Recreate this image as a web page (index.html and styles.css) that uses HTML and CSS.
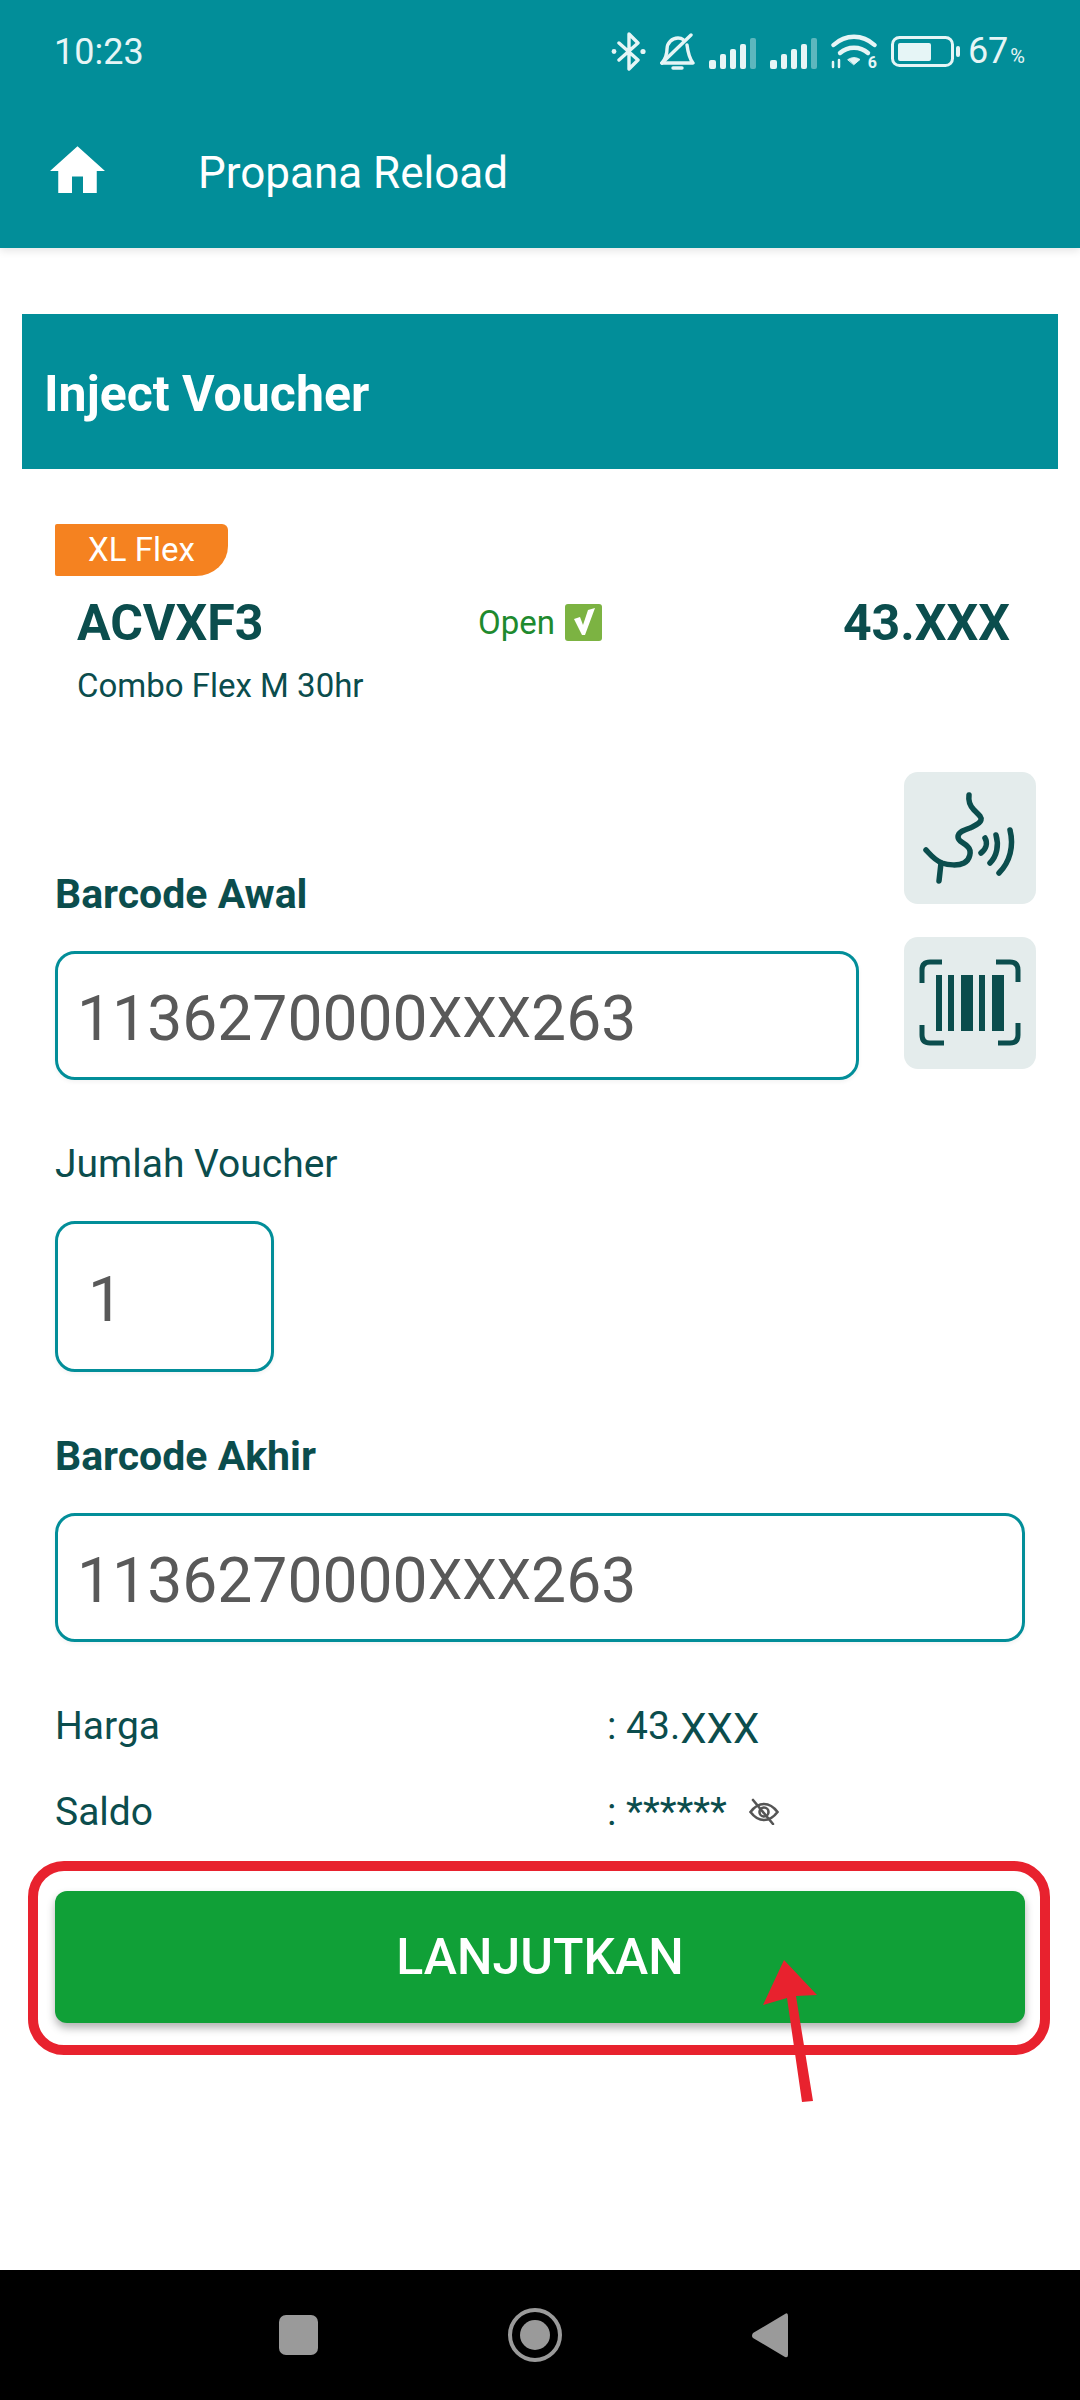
FILE: index.html
```html
<!DOCTYPE html>
<html lang="id">
<head>
    <meta charset="UTF-8">
    <meta name="viewport" content="width=device-width, initial-scale=1.0">
    <title>Propana Reload</title>
    <link rel="stylesheet" href="styles.css">
</head>
<body>
    <div class="page">
        <header class="top">
            <div class="status-bar">
                <span class="time">10:23</span>
                <div class="status-icons">
                    <svg width="35" height="39" viewBox="0 0 35 39" fill="none" stroke="#e6f5f6" stroke-width="3.4" stroke-linejoin="round" stroke-linecap="round">
                        <path d="M8 11l19 17-9 9V2l9 9L8 28"/>
                        <circle cx="3" cy="19.5" r="2.4" fill="#e6f5f6" stroke="none"/>
                        <circle cx="32" cy="19.5" r="2.6" fill="#e6f5f6" stroke="none"/>
                    </svg>
                    <svg width="35" height="37" viewBox="0 0 35 37" fill="none" stroke="#e6f5f6" stroke-width="3.4" stroke-linecap="round" stroke-linejoin="round">
                        <path d="M2 30c4-5 5-9 5-14 0-6 5-11 11-11 2 0 4 .6 5 1.500"/>
                        <path d="M27 12c1 8 2 13 6 18H2"/>
                        <path d="M2 30L31 2"/>
                        <path d="M13 35h9"/>
                    </svg>
                    <svg class="signal" width="47" height="31" viewBox="0 0 47 31">
                        <rect x="0" y="22" width="7" height="9" rx="2"/>
                        <rect x="11" y="16" width="6" height="15" rx="2"/>
                        <rect x="21" y="11" width="6" height="20" rx="2"/>
                        <rect x="31" y="6" width="6" height="25" rx="2"/>
                        <rect class="dim" x="41" y="0" width="6" height="31" rx="2"/>
                    </svg>
                    <svg class="signal" width="47" height="31" viewBox="0 0 47 31">
                        <rect x="0" y="22" width="7" height="9" rx="2"/>
                        <rect x="11" y="16" width="6" height="15" rx="2"/>
                        <rect x="21" y="11" width="6" height="20" rx="2"/>
                        <rect x="31" y="6" width="6" height="25" rx="2"/>
                        <rect class="dim" x="41" y="0" width="6" height="31" rx="2"/>
                    </svg>
                    <div class="wifi">
                        <svg width="46" height="35" viewBox="0 0 46 35" fill="none" stroke="#e6f5f6" stroke-width="4.4" stroke-linecap="round">
                            <path d="M2.500 11c12-11 29-11 41 0"/>
                            <path d="M9 19c8-7 20-7 28 0"/>
                            <path d="M17 25.500c4-2.500 8-2.500 12 0l-6 5z" fill="#e6f5f6" stroke-width="1"/>
                            <path d="M2 28v5M8 26v7" stroke-width="2.500"/>
                        </svg>
                        <span class="wifi-six">6</span>
                    </div>
                    <svg class="battery-icon" width="69" height="32" viewBox="0 0 69 32" fill="none">
                        <rect x="1.500" y="1.500" width="60" height="28" rx="7" stroke="#e6f5f6" stroke-width="3"/>
                        <rect x="7" y="7" width="33" height="18" rx="2" fill="#e6f5f6"/>
                        <rect x="65" y="10" width="4" height="11" rx="2" fill="#e6f5f6"/>
                    </svg>
                    <span class="battery">67<small>%</small></span>
                </div>
            </div>
            <div class="app-bar">
                <svg class="home-icon" width="55" height="47" viewBox="2 3 20 17" fill="#fff">
                    <path d="M10 20v-6h4v6h5v-8h3L12 3 2 12h3v8z"/>
                </svg>
                <span class="app-title">Propana Reload</span>
            </div>
        </header>

        <main class="main">
            <h1 class="section-title">Inject Voucher</h1>

            <section class="product">
                <span class="tag">XL Flex</span>
                <div class="product-row">
                    <span class="code">ACVXF3</span>
                    <span class="state">Open
                        <svg width="37" height="37" viewBox="0 0 37 37">
                            <rect x="0" y="0" width="37" height="37" rx="3" fill="#7cb342"/>
                            <path d="M9 15l8 16h3L30 4l-7 2-5 15-3-8z" fill="#fff"/>
                        </svg>
                    </span>
                    <span class="price">43.XXX</span>
                </div>
                <p class="product-name">Combo Flex M 30hr</p>
            </section>

            <section class="form">
                <div class="barcode-row">
                    <div class="barcode-left">
                        <label class="label strong">Barcode Awal</label>
                        <div class="field">1136270000<span class="mask">XXX</span>263</div>
                    </div>
                    <div class="tools">
                        <button class="tool">
                            <svg width="132" height="132" viewBox="0 0 132 132" fill="none" stroke="#0b4d4d" stroke-width="5.500" stroke-linecap="round" stroke-linejoin="round">
                                <path d="M65 23C64 30 66 34 70 38C74 42 78 45 77 48C76 52 70 54 66 56C60 58 54 60 54 65C54 70 60 70 64 75C68 79 66 88 60 91C54 94 44 93 38 91C30 88 26 82 22 78"/>
                                <path d="M37 91l-2 18"/>
                                <path d="M81 66c3 5 1 11-4 15"/>
                                <path d="M92 63c3 10 1 21-6 28"/>
                                <path d="M106 58c4 16 0 32-11 43"/>
                            </svg>
                        </button>
                        <button class="tool">
                            <svg width="132" height="132" viewBox="0 0 132 132" fill="none" stroke="#0b4d4d" stroke-width="5">
                                <path d="M38 25H26q-8 0-8 8v13"/>
                                <path d="M92 25h14q8 0 8 8v12"/>
                                <path d="M18 88v10q0 8 8 8h14"/>
                                <path d="M94 106h12q8 0 8-8V86"/>
                                <g fill="#0b4d4d" stroke="none">
                                    <rect x="32" y="38" width="6" height="56"/>
                                    <rect x="44" y="38" width="6" height="56"/>
                                    <rect x="57" y="38" width="12" height="56"/>
                                    <rect x="75" y="38" width="6" height="56"/>
                                    <rect x="88" y="38" width="12" height="56"/>
                                </g>
                            </svg>
                        </button>
                    </div>
                </div>

                <label class="label qty-label">Jumlah Voucher</label>
                <div class="field qty">1</div>

                <label class="label strong end-label">Barcode Akhir</label>
                <div class="field wide">1136270000<span class="mask">XXX</span>263</div>

                <div class="info-list">
                    <div class="info-row">
                        <span>Harga</span>
                        <span>: 43.<span class="info-mask">XXX</span></span>
                    </div>
                    <div class="info-row">
                        <span>Saldo</span>
                        <span class="saldo">: ******
                            <svg width="30" height="27" viewBox="0 0 30 27" fill="none" stroke="#555" stroke-width="2.600" stroke-linecap="round">
                                <path d="M1.500 14C6 8 10 6 15 6s9 2 13.500 8C24 20 20 22 15 22S6 20 1.500 14z"/>
                                <circle cx="15" cy="14" r="4.500"/>
                                <path d="M4 2l20 24"/>
                            </svg>
                        </span>
                    </div>
                </div>

                <div class="action wide">
                    <button class="next-button">LANJUTKAN</button>
                    <div class="highlight"></div>
                    <svg class="pointer" width="70" height="150" viewBox="0 0 70 150" fill="#e8222e">
                        <path d="M29 5L8 50l24-7 15 104 11-1-17-105 21-1z"/>
                    </svg>
                </div>
            </section>
        </main>

        <nav class="nav-bar">
            <span class="nav-square"></span>
            <span class="nav-circle"><span></span></span>
            <svg width="36" height="45" viewBox="0 0 36 45" fill="#9a9a9a">
                <path d="M33 1q3-2 3 2v39q0 3-3 2L1 25q-2-2 0-5z"/>
            </svg>
        </nav>
    </div>
</body>
</html>
```

FILE: styles.css
```css
* {
    box-sizing: border-box;
}

body {
    margin: 0;
    background: #fff;
    font-family: Roboto, "Liberation Sans", sans-serif;
}

.page {
    width: 1080px;
    height: 2400px;
    display: flex;
    flex-direction: column;
    overflow: hidden;
}

/* Header */
.top {
    background-color: #028e99;
    color: #fff;
    height: 248px;
    box-shadow: 0 3px 8px rgba(0, 0, 0, 0.1);
}

.status-bar {
    height: 90px;
    padding: 13px 55px 0 54px;
    display: flex;
    justify-content: space-between;
    align-items: center;
    color: #e6f5f6;
}

.time {
    font-size: 36px;
    line-height: 44px;
}

.status-icons {
    display: flex;
    align-items: center;
    gap: 14px;
}

.signal rect {
    fill: #e6f5f6;
}

.signal .dim {
    opacity: 0.4;
}

.signal {
    margin-top: 3px;
}

.wifi {
    position: relative;
    width: 46px;
    height: 35px;
}

.wifi svg {
    display: block;
}

.wifi-six {
    position: absolute;
    right: 0;
    bottom: -2px;
    font-size: 16px;
    line-height: 16px;
    font-weight: 700;
}

.battery-icon {
    margin-right: -6px;
}

.battery {
    padding-top: 3px;
    font-size: 36px;
    line-height: 44px;
}

.battery small {
    font-size: 20px;
    margin-left: 2px;
}

.app-bar {
    height: 158px;
    padding-left: 50px;
    display: flex;
    align-items: center;
    gap: 93px;
}

.app-title {
    font-size: 44px;
    line-height: 50px;
    padding-top: 8px;
}

/* Isi */
.main {
    flex: 1;
    padding: 66px 22px 0;
    color: #0b4d4d;
}

.section-title {
    margin: 0;
    height: 155px;
    padding: 4px 0 0 22px;
    display: flex;
    align-items: center;
    background-color: #028e99;
    color: #fff;
    font-size: 50px;
    font-weight: 700;
}

.product {
    padding-top: 55px;
}

.tag {
    display: block;
    width: 173px;
    height: 52px;
    margin-left: 33px;
    background-color: #f58220;
    color: #fff;
    font-size: 33px;
    line-height: 52px;
    text-align: center;
    border-radius: 2px 6px 32px 2px / 2px 6px 30px 2px;
}

.product-row {
    display: grid;
    grid-template-columns: 401px 1fr auto;
    align-items: center;
    height: 56px;
    margin: 19px 48px 0 55px;
}

.code, .price {
    font-size: 50px;
    line-height: 56px;
    font-weight: 700;
}

.state {
    display: flex;
    align-items: center;
    gap: 10px;
    margin-top: -2px;
    color: #1e8a2e;
    font-size: 33px;
}

.product-name {
    margin: 15px 0 0 55px;
    font-size: 33px;
    line-height: 40px;
}

.form {
    padding: 66px 22px 0 33px;
}

.barcode-row {
    display: flex;
    justify-content: space-between;
    align-items: flex-end;
}

.barcode-left {
    width: 804px;
}

.label {
    display: block;
    font-size: 39px;
    line-height: 44px;
}

.strong {
    font-size: 41px;
    font-weight: 700;
}

.field {
    height: 129px;
    margin-top: 35px;
    padding: 5px 0 0 19px;
    display: flex;
    align-items: center;
    border: 3px solid #028e99;
    border-radius: 20px;
    color: #595959;
    font-size: 62.4px;
    box-shadow: 0 2px 4px rgba(0, 0, 0, 0.05);
}

.mask {
    font-size: 55px;
}

.tools {
    display: flex;
    flex-direction: column;
    gap: 33px;
    margin-bottom: 11px;
}

.tool {
    width: 132px;
    height: 132px;
    padding: 0;
    border: none;
    border-radius: 14px;
    background-color: #e4ecec;
}

.tool svg {
    display: block;
}

.qty-label {
    margin-top: 62px;
}

.qty {
    width: 219px;
    height: 151px;
    padding-left: 30px;
}

.end-label {
    margin-top: 62px;
}

.wide {
    margin-right: 11px;
}

.info-list {
    margin-top: 62px;
    display: flex;
    flex-direction: column;
    gap: 42px;
}

.info-row {
    display: grid;
    grid-template-columns: 552px 1fr;
    height: 44px;
    font-size: 39px;
    line-height: 44px;
}

.info-mask {
    font-size: 42px;
    vertical-align: -4px;
}

.saldo svg {
    margin-left: 12px;
    vertical-align: 0;
}

.action {
    position: relative;
    margin-top: 57px;
}

.next-button {
    display: block;
    width: 100%;
    height: 132px;
    border: none;
    border-radius: 12px;
    background-color: #10a037;
    color: #fff;
    font-family: inherit;
    font-size: 50px;
    font-weight: 500;
    box-shadow: 0 5px 8px rgba(0, 0, 0, 0.3);
}

.highlight {
    position: absolute;
    top: -30px;
    left: -27px;
    right: -25px;
    bottom: -32px;
    border: 10px solid #e8222e;
    border-radius: 36px;
}

.pointer {
    position: absolute;
    left: 700px;
    top: 64px;
}

/* Navigasi bawah */
.nav-bar {
    height: 130px;
    padding-left: 279px;
    display: flex;
    align-items: center;
    gap: 190px;
    background-color: #000;
}

.nav-square {
    width: 39px;
    height: 40px;
    border-radius: 7px;
    background-color: #9a9a9a;
}

.nav-circle {
    width: 54px;
    height: 54px;
    display: flex;
    align-items: center;
    justify-content: center;
    border: 4px solid #9a9a9a;
    border-radius: 50%;
}

.nav-circle span {
    width: 30px;
    height: 30px;
    border-radius: 50%;
    background-color: #9a9a9a;
}
```
